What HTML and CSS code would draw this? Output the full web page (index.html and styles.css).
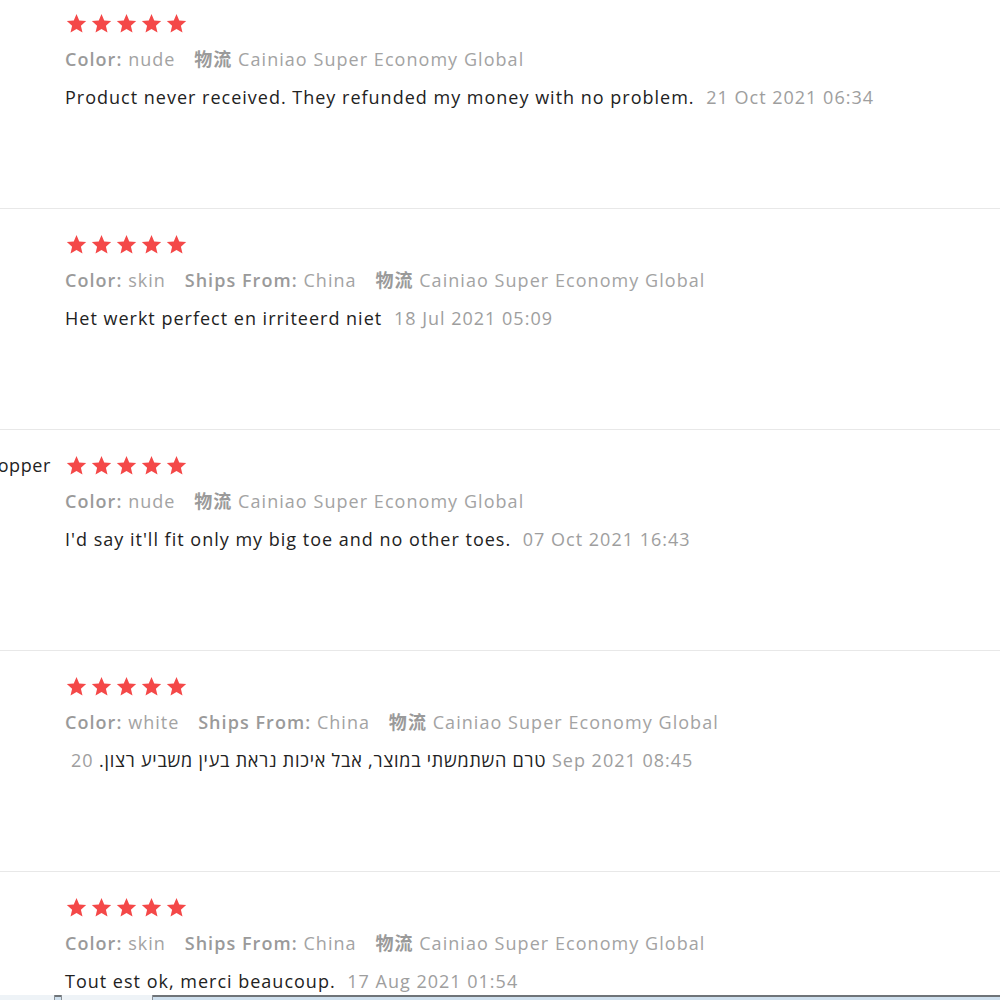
FILE: index.html
```html
<!DOCTYPE html>
<html>
<head>
<meta charset="utf-8">
<link rel="stylesheet" href="styles.css">
</head>
<body>
<div class="list">
  <div class="review">
    <div class="user"></div>
    <div class="content">
      <div class="stars">
        <svg viewBox="0 0 20 20"><path d="M10 1l2.6 6.1 6.6.6-5 4.4 1.5 6.5L10 15.2l-5.7 3.4 1.5-6.5-5-4.4 6.6-.6z"/></svg>
        <svg viewBox="0 0 20 20"><path d="M10 1l2.6 6.1 6.6.6-5 4.4 1.5 6.5L10 15.2l-5.7 3.4 1.5-6.5-5-4.4 6.6-.6z"/></svg>
        <svg viewBox="0 0 20 20"><path d="M10 1l2.6 6.1 6.6.6-5 4.4 1.5 6.5L10 15.2l-5.7 3.4 1.5-6.5-5-4.4 6.6-.6z"/></svg>
        <svg viewBox="0 0 20 20"><path d="M10 1l2.6 6.1 6.6.6-5 4.4 1.5 6.5L10 15.2l-5.7 3.4 1.5-6.5-5-4.4 6.6-.6z"/></svg>
        <svg viewBox="0 0 20 20"><path d="M10 1l2.6 6.1 6.6.6-5 4.4 1.5 6.5L10 15.2l-5.7 3.4 1.5-6.5-5-4.4 6.6-.6z"/></svg>
      </div>
      <div class="meta">
        <span class="item"><b>Color:</b> nude</span>
        <span class="item"><b>物流</b> Cainiao Super Economy Global</span>
      </div>
      <div class="text">Product never received. They refunded my money with no problem. <span class="date">21 Oct 2021 06:34</span></div>
    </div>
  </div>

  <div class="review">
    <div class="user"></div>
    <div class="content">
      <div class="stars">
        <svg viewBox="0 0 20 20"><path d="M10 1l2.6 6.1 6.6.6-5 4.4 1.5 6.5L10 15.2l-5.7 3.4 1.5-6.5-5-4.4 6.6-.6z"/></svg>
        <svg viewBox="0 0 20 20"><path d="M10 1l2.6 6.1 6.6.6-5 4.4 1.5 6.5L10 15.2l-5.7 3.4 1.5-6.5-5-4.4 6.6-.6z"/></svg>
        <svg viewBox="0 0 20 20"><path d="M10 1l2.6 6.1 6.6.6-5 4.4 1.5 6.5L10 15.2l-5.7 3.4 1.5-6.5-5-4.4 6.6-.6z"/></svg>
        <svg viewBox="0 0 20 20"><path d="M10 1l2.6 6.1 6.6.6-5 4.4 1.5 6.5L10 15.2l-5.7 3.4 1.5-6.5-5-4.4 6.6-.6z"/></svg>
        <svg viewBox="0 0 20 20"><path d="M10 1l2.6 6.1 6.6.6-5 4.4 1.5 6.5L10 15.2l-5.7 3.4 1.5-6.5-5-4.4 6.6-.6z"/></svg>
      </div>
      <div class="meta">
        <span class="item"><b>Color:</b> skin</span>
        <span class="item"><b>Ships From:</b> China</span>
        <span class="item"><b>物流</b> Cainiao Super Economy Global</span>
      </div>
      <div class="text">Het werkt perfect en irriteerd niet <span class="date">18 Jul 2021 05:09</span></div>
    </div>
  </div>

  <div class="review">
    <div class="user"><span class="name">Shopper</span></div>
    <div class="content">
      <div class="stars">
        <svg viewBox="0 0 20 20"><path d="M10 1l2.6 6.1 6.6.6-5 4.4 1.5 6.5L10 15.2l-5.7 3.4 1.5-6.5-5-4.4 6.6-.6z"/></svg>
        <svg viewBox="0 0 20 20"><path d="M10 1l2.6 6.1 6.6.6-5 4.4 1.5 6.5L10 15.2l-5.7 3.4 1.5-6.5-5-4.4 6.6-.6z"/></svg>
        <svg viewBox="0 0 20 20"><path d="M10 1l2.6 6.1 6.6.6-5 4.4 1.5 6.5L10 15.2l-5.7 3.4 1.5-6.5-5-4.4 6.6-.6z"/></svg>
        <svg viewBox="0 0 20 20"><path d="M10 1l2.6 6.1 6.6.6-5 4.4 1.5 6.5L10 15.2l-5.7 3.4 1.5-6.5-5-4.4 6.6-.6z"/></svg>
        <svg viewBox="0 0 20 20"><path d="M10 1l2.6 6.1 6.6.6-5 4.4 1.5 6.5L10 15.2l-5.7 3.4 1.5-6.5-5-4.4 6.6-.6z"/></svg>
      </div>
      <div class="meta">
        <span class="item"><b>Color:</b> nude</span>
        <span class="item"><b>物流</b> Cainiao Super Economy Global</span>
      </div>
      <div class="text">I'd say it'll fit only my big toe and no other toes. <span class="date">07 Oct 2021 16:43</span></div>
    </div>
  </div>

  <div class="review">
    <div class="user"></div>
    <div class="content">
      <div class="stars">
        <svg viewBox="0 0 20 20"><path d="M10 1l2.6 6.1 6.6.6-5 4.4 1.5 6.5L10 15.2l-5.7 3.4 1.5-6.5-5-4.4 6.6-.6z"/></svg>
        <svg viewBox="0 0 20 20"><path d="M10 1l2.6 6.1 6.6.6-5 4.4 1.5 6.5L10 15.2l-5.7 3.4 1.5-6.5-5-4.4 6.6-.6z"/></svg>
        <svg viewBox="0 0 20 20"><path d="M10 1l2.6 6.1 6.6.6-5 4.4 1.5 6.5L10 15.2l-5.7 3.4 1.5-6.5-5-4.4 6.6-.6z"/></svg>
        <svg viewBox="0 0 20 20"><path d="M10 1l2.6 6.1 6.6.6-5 4.4 1.5 6.5L10 15.2l-5.7 3.4 1.5-6.5-5-4.4 6.6-.6z"/></svg>
        <svg viewBox="0 0 20 20"><path d="M10 1l2.6 6.1 6.6.6-5 4.4 1.5 6.5L10 15.2l-5.7 3.4 1.5-6.5-5-4.4 6.6-.6z"/></svg>
      </div>
      <div class="meta">
        <span class="item"><b>Color:</b> white</span>
        <span class="item"><b>Ships From:</b> China</span>
        <span class="item"><b>物流</b> Cainiao Super Economy Global</span>
      </div>
      <div class="text text-he">טרם השתמשתי במוצר, אבל איכות נראת בעין משביע רצון. <span class="date">20 Sep 2021 08:45</span></div>
    </div>
  </div>

  <div class="review">
    <div class="user"></div>
    <div class="content">
      <div class="stars">
        <svg viewBox="0 0 20 20"><path d="M10 1l2.6 6.1 6.6.6-5 4.4 1.5 6.5L10 15.2l-5.7 3.4 1.5-6.5-5-4.4 6.6-.6z"/></svg>
        <svg viewBox="0 0 20 20"><path d="M10 1l2.6 6.1 6.6.6-5 4.4 1.5 6.5L10 15.2l-5.7 3.4 1.5-6.5-5-4.4 6.6-.6z"/></svg>
        <svg viewBox="0 0 20 20"><path d="M10 1l2.6 6.1 6.6.6-5 4.4 1.5 6.5L10 15.2l-5.7 3.4 1.5-6.5-5-4.4 6.6-.6z"/></svg>
        <svg viewBox="0 0 20 20"><path d="M10 1l2.6 6.1 6.6.6-5 4.4 1.5 6.5L10 15.2l-5.7 3.4 1.5-6.5-5-4.4 6.6-.6z"/></svg>
        <svg viewBox="0 0 20 20"><path d="M10 1l2.6 6.1 6.6.6-5 4.4 1.5 6.5L10 15.2l-5.7 3.4 1.5-6.5-5-4.4 6.6-.6z"/></svg>
      </div>
      <div class="meta">
        <span class="item"><b>Color:</b> skin</span>
        <span class="item"><b>Ships From:</b> China</span>
        <span class="item"><b>物流</b> Cainiao Super Economy Global</span>
      </div>
      <div class="text">Tout est ok, merci beaucoup. <span class="date">17 Aug 2021 01:54</span></div>
    </div>
  </div>
</div>

<div class="taskbar">
  <span class="tab tab-a"></span>
  <span class="tab tab-b"></span>
</div>
</body>
</html>
```

FILE: styles.css
```css
html, body {
  margin: 0;
  padding: 0;
  background: #fff;
  overflow: hidden;
}

body {
  font-family: "Open Sans", "Noto Sans CJK SC", sans-serif;
  color: #222;
}

.list {
  margin-top: -12px;
}

.review {
  display: flex;
  height: 220px;
  border-bottom: 1px solid #e8e8e8;
}

.user {
  width: 51px;
  flex: none;
  margin-right: 14px;
  display: flex;
  justify-content: flex-end;
  overflow: hidden;
  padding-top: 23px;
  height: 24px;
}

.name {
  flex: none;
  font-size: 18px;
  line-height: 24px;
  letter-spacing: 0.6px;
  color: #222;
  white-space: nowrap;
}

.content {
  flex: 1;
  padding-top: 25px;
}

.stars {
  display: flex;
  gap: 4px;
  height: 21px;
  margin-left: 1px;
}

.stars svg {
  width: 21px;
  height: 21px;
  fill: #f44848;
}

.meta {
  margin-top: 13px;
  font-size: 18px;
  line-height: 24px;
  letter-spacing: 1.05px;
  color: #a3a3a3;
  white-space: nowrap;
}

.meta .item {
  margin-right: 13px;
}

.meta b {
  font-weight: 600;
  color: #9a9a9a;
}

.text {
  margin-top: 14px;
  font-size: 18px;
  line-height: 24px;
  letter-spacing: 1px;
  color: #222;
  white-space: nowrap;
}

.text-he {
  letter-spacing: 0.75px;
}

.date {
  color: #9e9e9e;
  margin-left: 6px;
}

.text-he .date {
  letter-spacing: 1px;
}

.taskbar {
  position: fixed;
  left: 0;
  right: 0;
  bottom: 0;
  height: 3px;
  border-top: 2px solid #6f7478;
  background: #cfe0ee;
}

.tab {
  position: absolute;
  top: -2px;
  height: 5px;
  border-left: 1px solid #8a9096;
  border-right: 1px solid #8a9096;
  background: #eef3f7;
}

.tab-a {
  left: -2px;
  width: 55px;
}

.tab-b {
  left: 61px;
  width: 90px;
}
```
